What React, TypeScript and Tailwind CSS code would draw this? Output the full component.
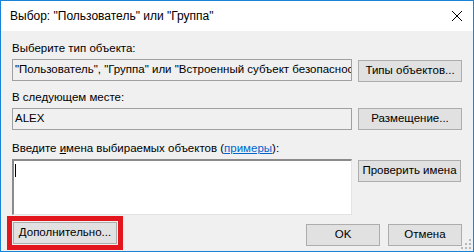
import React from 'react';

const font = { fontFamily: '"Liberation Sans", Arial, sans-serif' };

function Btn({ label, w, className = '' }: { label: React.ReactNode; w: string; className?: string }) {
  return (
    <div
      className={`flex h-[22px] items-center justify-center whitespace-nowrap border border-[#adadad] bg-[#e1e1e1] text-[11.5px] leading-none text-black ${w} ${className}`}
    >
      {label}
    </div>
  );
}

function SizeGrip() {
  const dots = [
    [8, 0],
    [4, 4],
    [8, 4],
    [0, 8],
    [4, 8],
    [8, 8],
  ];
  return (
    <svg width="11" height="11" viewBox="0 0 11 11" className="absolute bottom-[1px] right-[1px]">
      {dots.map(([x, y]) => (
        <rect key={`${x}-${y}`} x={x} y={y} width="2" height="2" fill="#b8b8b8" />
      ))}
    </svg>
  );
}

export default function App() {
  return (
    <div className="h-[252px] w-[474px] bg-white" style={font}>
      <div className="relative flex h-full w-full flex-col border border-[#1883d7]">
        {/* title bar */}
        <div className="flex h-[30px] items-center justify-between bg-white pl-[9px] pr-[9px]">
          <span className="text-[12px] text-black">Выбор: "Пользователь" или "Группа"</span>
          <svg width="12" height="12" viewBox="0 0 12 12" className="mr-[1px]">
            <path d="M1 1 L11 11 M11 1 L1 11" stroke="#000" strokeWidth="1" />
          </svg>
        </div>

        <div className="flex flex-1 flex-col bg-[#f0f0f0] pl-[11px] pr-[11px] text-[11.5px] text-black">
          <div className="mt-[10px] leading-[15px]">Выберите тип объекта:</div>
          <div className="mt-[3px] flex items-start gap-[6px]">
            <div className="flex h-[22px] w-[340px] items-center overflow-hidden whitespace-nowrap border border-[#a0a0a0] bg-[#f0f0f0] pl-[2px]">
              "Пользователь", "Группа" или "Встроенный субъект безопасности"
            </div>
            <Btn label="Типы объектов..." w="w-[104px]" className="mt-[1px]" />
          </div>

          <div className="mt-[8px] leading-[15px]">В следующем месте:</div>
          <div className="mt-[3px] flex items-start gap-[6px]">
            <div className="flex h-[22px] w-[340px] items-center border border-[#a0a0a0] bg-[#f0f0f0] pl-[2px]">ALEX</div>
            <Btn label="Размещение..." w="w-[104px]" />
          </div>

          <div className="mt-[11px] leading-[15px]">
            Введите <span className="underline">и</span>мена выбираемых объектов (
            <span className="text-[#0066cc] underline">примеры</span>):
          </div>
          <div className="mt-[3px] flex items-start gap-[6px]">
            <div className="h-[56px] w-[340px] border-l-2 border-t-2 border-b border-r border-l-[#8a8a8a] border-t-[#8a8a8a] border-b-[#e3e3e3] border-r-[#e3e3e3] bg-white pl-[1px] pt-[3px]">
              <div className="h-[13px] w-px bg-black" />
            </div>
            <Btn label="Проверить имена" w="w-[103px]" className="mt-[1px]" />
          </div>

          <div className="mt-[1px] flex items-start justify-between">
            <div className="ml-[-5px] border-[5px] border-[#e3151d] p-[1px]">
              <Btn label="Дополнительно..." w="w-[104px]" />
            </div>
            <div className="mt-[8px] flex gap-[8px]">
              <Btn label="OK" w="w-[74px]" />
              <Btn label="Отмена" w="w-[74px]" />
            </div>
          </div>
        </div>
        <SizeGrip />
      </div>
    </div>
  );
}
